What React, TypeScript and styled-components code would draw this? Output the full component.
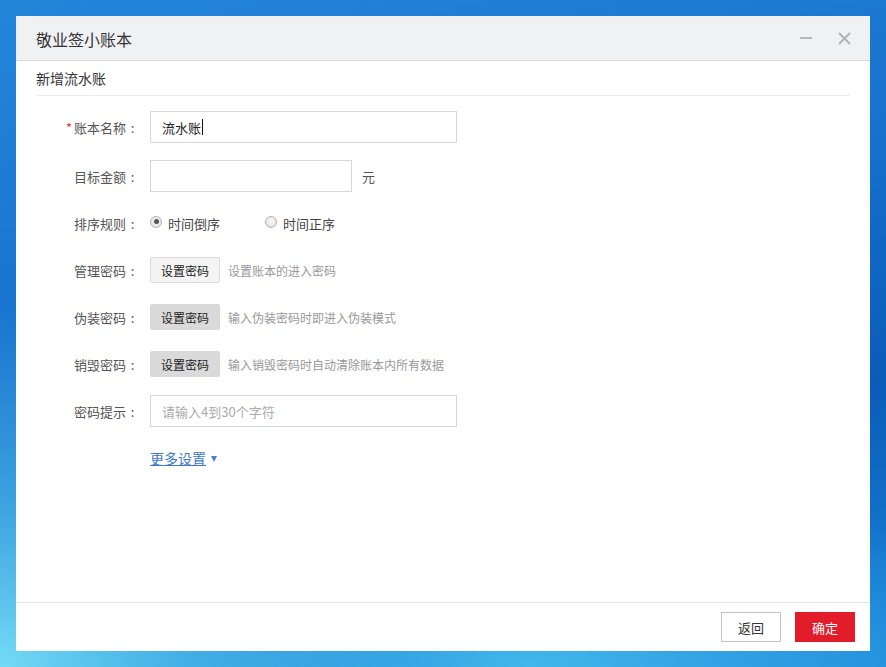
import React from "react";
import styled, { createGlobalStyle } from "styled-components";

const GlobalStyle = createGlobalStyle`
    html, body {
        margin: 0;
        padding: 0;
    }
    body {
        font-family: "Microsoft YaHei", "Noto Sans CJK SC", "Liberation Sans", sans-serif;
        color: #333;
    }
    * {
        box-sizing: border-box;
    }
`;

const Desktop = styled.div`
    width: 886px;
    height: 667px;
    padding: 16px;
    overflow: hidden;
    background:
        radial-gradient(ellipse 420px 360px at 0% 100%, rgba(120, 226, 250, 0.95) 0%, rgba(90, 205, 245, 0.6) 45%, rgba(60, 170, 235, 0) 100%),
        radial-gradient(ellipse 500px 200px at 60% 100%, rgba(70, 190, 240, 0.9) 0%, rgba(70, 190, 240, 0) 100%),
        linear-gradient(165deg, #2386d9 0%, #1772cd 40%, #0a5cb9 68%, #1b86da 100%);
`;

const Dialog = styled.div`
    width: 854px;
    height: 635px;
    background: #fff;
    display: flex;
    flex-direction: column;
`;

const TitleBar = styled.div`
    height: 45px;
    flex: none;
    background: #f0f1f3;
    border-bottom: 1px solid #d8d8dc;
    display: flex;
    align-items: center;
    padding: 0 16px 0 20px;
`;

const Title = styled.div`
    flex: 1;
    font-size: 16px;
    line-height: 20px;
    color: #333;
    padding-top: 1px;
`;

const WinButton = styled.button`
    width: 20px;
    height: 20px;
    padding: 0;
    border: none;
    background: transparent;
    display: flex;
    align-items: center;
    justify-content: center;
    margin-left: 18px;
    cursor: pointer;
`;

const Body = styled.div`
    flex: 1;
    padding: 0 20px;
`;

const SubHeader = styled.div`
    height: 35px;
    border-bottom: 1px solid #ebebeb;
    font-size: 14px;
    line-height: 34px;
    color: #333;
`;

const Form = styled.div`
    display: flex;
    flex-direction: column;
    gap: 15px;
    padding-top: 15px;
`;

const Row = styled.div`
    display: flex;
    align-items: center;
    height: 32px;

    &:first-child {
        margin-bottom: 2px;
    }
`;

const Label = styled.div`
    width: 103px;
    flex: none;
    margin-right: 11px;
    display: flex;
    justify-content: flex-end;
    align-items: center;
    font-size: 13px;
    color: #555;
`;

const Colon = styled.span`
    display: inline-block;
    width: 13px;
    text-align: center;
`;

const Required = styled.span`
    color: #e4393c;
    margin-right: 2px;
`;

const Field = styled.div<{ $width: number }>`
    width: ${(p) => p.$width}px;
    height: 32px;
    border: 1px solid #d6d6d6;
    background: #fff;
    display: flex;
    align-items: center;
    padding: 0 11px;
    font-size: 13px;
    color: #222;
`;

const Placeholder = styled.span`
    color: #aaa;
`;

const Caret = styled.span`
    display: inline-block;
    width: 1px;
    height: 16px;
    background: #111;
    margin-left: 1px;
`;

const Unit = styled.span`
    margin-left: 10px;
    font-size: 13px;
    color: #555;
`;

const RadioOption = styled.label<{ $width: number }>`
    display: flex;
    align-items: center;
    width: ${(p) => p.$width}px;
    font-size: 13px;
    color: #444;
    cursor: pointer;
`;

const RadioDot = styled.span<{ $checked?: boolean }>`
    width: 12px;
    height: 12px;
    border-radius: 50%;
    border: 1px solid #b4b4b4;
    background: radial-gradient(circle at 50% 40%, #f8f8f8 0%, #dedede 100%);
    margin-right: 6px;
    margin-top: -3px;
    position: relative;

    &::after {
        content: "";
        display: ${(p) => (p.$checked ? "block" : "none")};
        position: absolute;
        left: 2.5px;
        top: 2.5px;
        width: 5px;
        height: 5px;
        border-radius: 50%;
        background: #555;
    }
`;

const SetButton = styled.button<{ $muted?: boolean }>`
    width: 70px;
    height: 26px;
    padding: 0;
    border: 1px solid ${(p) => (p.$muted ? "#d9d9d9" : "#dcdcdc")};
    border-radius: 2px;
    background: ${(p) => (p.$muted ? "#dadada" : "#f4f4f4")};
    font-family: inherit;
    font-size: 12px;
    color: #222;
    cursor: pointer;
`;

const Hint = styled.span`
    margin-left: 8px;
    font-size: 12px;
    color: #999;
`;

const MoreLink = styled.a`
    margin-left: 114px;
    font-size: 14px;
    color: #3d78cc;
    text-decoration: underline;
    text-decoration-thickness: 1px;
    text-underline-offset: 1px;
    display: flex;
    align-items: center;
    cursor: pointer;
`;

const Arrow = styled.span`
    margin-left: 5px;
    width: 0;
    height: 0;
    border-left: 3.5px solid transparent;
    border-right: 3.5px solid transparent;
    border-top: 6px solid #4a7fd0;
    margin-top: 1px;
`;

const Footer = styled.div`
    height: 49px;
    flex: none;
    border-top: 1px solid #e6e6e6;
    display: flex;
    justify-content: flex-end;
    align-items: flex-start;
    gap: 14px;
    padding: 9px 15px 0 0;
`;

const FooterButton = styled.button<{ $primary?: boolean }>`
    width: 60px;
    height: 30px;
    padding: 0;
    font-family: inherit;
    font-size: 13px;
    border: 1px solid ${(p) => (p.$primary ? "#e31c2a" : "#c4c4c4")};
    background: ${(p) => (p.$primary ? "#e31c2a" : "#fff")};
    color: ${(p) => (p.$primary ? "#fff" : "#333")};
    cursor: pointer;
`;

const passwordRows = [
    { label: "管理密码", hint: "设置账本的进入密码", muted: false },
    { label: "伪装密码", hint: "输入伪装密码时即进入伪装模式", muted: true },
    { label: "销毁密码", hint: "输入销毁密码时自动清除账本内所有数据", muted: true },
];

export default function App() {
    return (
        <>
            <GlobalStyle />
            <Desktop>
                <Dialog>
                    <TitleBar>
                        <Title>敬业签小账本</Title>
                        <WinButton aria-label="最小化">
                            <svg width="12" height="12" viewBox="0 0 12 12">
                                <rect x="0" y="5" width="12" height="2" fill="#b8b8b8" />
                            </svg>
                        </WinButton>
                        <WinButton aria-label="关闭">
                            <svg width="13" height="13" viewBox="0 0 13 13">
                                <path d="M1 1 L12 12 M12 1 L1 12" stroke="#b4b4b4" strokeWidth="2" />
                            </svg>
                        </WinButton>
                    </TitleBar>
                    <Body>
                        <SubHeader>新增流水账</SubHeader>
                        <Form>
                            <Row>
                                <Label>
                                    <Required>*</Required>账本名称<Colon>:</Colon>
                                </Label>
                                <Field $width={307}>
                                    流水账
                                    <Caret />
                                </Field>
                            </Row>
                            <Row>
                                <Label>目标金额<Colon>:</Colon></Label>
                                <Field $width={202} />
                                <Unit>元</Unit>
                            </Row>
                            <Row>
                                <Label>排序规则<Colon>:</Colon></Label>
                                <RadioOption $width={115}>
                                    <RadioDot $checked />
                                    时间倒序
                                </RadioOption>
                                <RadioOption $width={100}>
                                    <RadioDot />
                                    时间正序
                                </RadioOption>
                            </Row>
                            {passwordRows.map((r) => (
                                <Row key={r.label}>
                                    <Label>{r.label}<Colon>:</Colon></Label>
                                    <SetButton $muted={r.muted}>设置密码</SetButton>
                                    <Hint>{r.hint}</Hint>
                                </Row>
                            ))}
                            <Row>
                                <Label>密码提示<Colon>:</Colon></Label>
                                <Field $width={307}>
                                    <Placeholder>请输入4到30个字符</Placeholder>
                                </Field>
                            </Row>
                            <Row>
                                <MoreLink>
                                    更多设置
                                    <Arrow />
                                </MoreLink>
                            </Row>
                        </Form>
                    </Body>
                    <Footer>
                        <FooterButton>返回</FooterButton>
                        <FooterButton $primary>确定</FooterButton>
                    </Footer>
                </Dialog>
            </Desktop>
        </>
    );
}
